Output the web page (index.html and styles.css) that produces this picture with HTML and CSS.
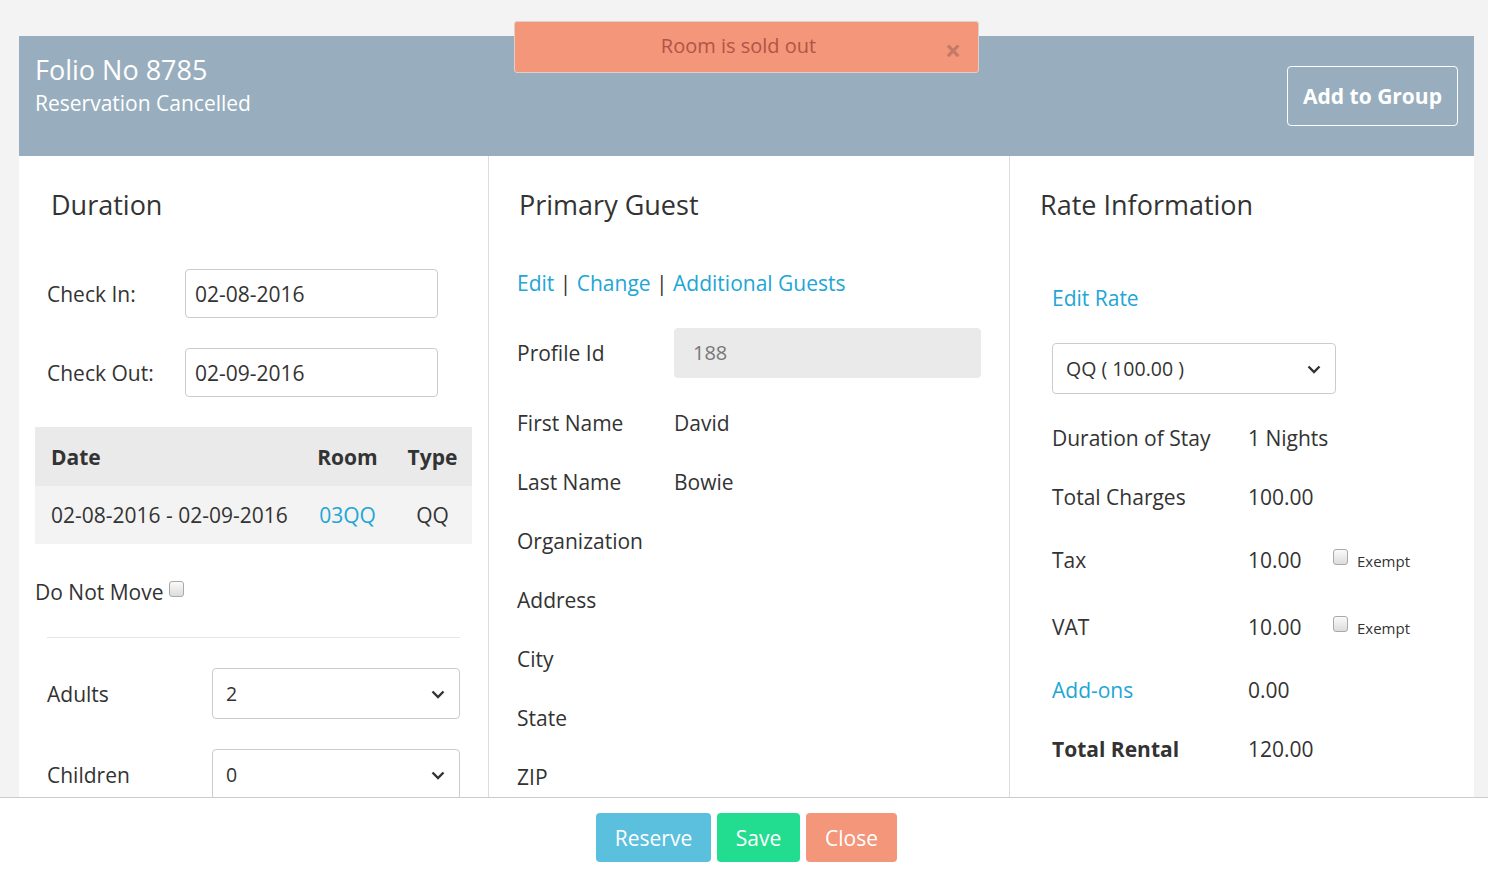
FILE: index.html
```html
<!DOCTYPE html>
<html>
<head>
<meta charset="utf-8">
<link rel="stylesheet" href="styles.css">
</head>
<body>
<div class="page">
  <div class="modal">
    <header class="head">
      <div class="head-titles">
        <div class="folio">Folio No 8785</div>
        <div class="status">Reservation Cancelled</div>
      </div>
      <button class="btn-outline">Add to Group</button>
    </header>
    <div class="cols">
      <section class="col col-duration">
        <h2 class="col-title">Duration</h2>
        <div class="frow frow-date">
          <label class="lbl lbl-date">Check In:</label>
          <div class="input input-date">02-08-2016</div>
        </div>
        <div class="frow frow-date">
          <label class="lbl lbl-date">Check Out:</label>
          <div class="input input-date">02-09-2016</div>
        </div>
        <table class="rooms">
          <colgroup><col class="w-date"><col class="w-room"><col class="w-type"></colgroup>
          <thead>
            <tr><th class="c-date">Date</th><th class="c-mid">Room</th><th class="c-mid">Type</th></tr>
          </thead>
          <tbody>
            <tr><td class="c-date">02-08-2016 - 02-09-2016</td><td class="c-mid"><a class="link">03QQ</a></td><td class="c-mid">QQ</td></tr>
          </tbody>
        </table>
        <div class="dnm">Do Not Move <input type="checkbox" class="chk"></div>
        <hr class="sep">
        <div class="frow">
          <label class="lbl lbl-count">Adults</label>
          <div class="input select select-count">2
            <svg class="chev" width="14" height="9" viewBox="0 0 14 9"><path d="M1.5 1.5 L7 7 L12.5 1.5" fill="none" stroke="#333" stroke-width="2.4"/></svg>
          </div>
        </div>
        <div class="frow">
          <label class="lbl lbl-count">Children</label>
          <div class="input select select-count">0
            <svg class="chev" width="14" height="9" viewBox="0 0 14 9"><path d="M1.5 1.5 L7 7 L12.5 1.5" fill="none" stroke="#333" stroke-width="2.4"/></svg>
          </div>
        </div>
      </section>

      <section class="col col-guest">
        <h2 class="col-title">Primary Guest</h2>
        <div class="links"><a class="link">Edit</a> | <a class="link">Change</a> | <a class="link">Additional Guests</a></div>
        <div class="grow">
          <span class="glbl">Profile Id</span>
          <div class="input input-ro">188</div>
        </div>
        <div class="grow"><span class="glbl">First Name</span><span>David</span></div>
        <div class="grow"><span class="glbl">Last Name</span><span>Bowie</span></div>
        <div class="grow"><span class="glbl">Organization</span></div>
        <div class="grow"><span class="glbl">Address</span></div>
        <div class="grow"><span class="glbl">City</span></div>
        <div class="grow"><span class="glbl">State</span></div>
        <div class="grow"><span class="glbl">ZIP</span></div>
      </section>

      <section class="col col-rate">
        <h2 class="col-title">Rate Information</h2>
        <div class="rate-body">
          <a class="link edit-rate">Edit Rate</a>
          <div class="input select select-rate">QQ ( 100.00 )
            <svg class="chev" width="14" height="9" viewBox="0 0 14 9"><path d="M1.5 1.5 L7 7 L12.5 1.5" fill="none" stroke="#333" stroke-width="2.4"/></svg>
          </div>
          <div class="rrow"><span class="rlbl">Duration of Stay</span><span class="rval">1 Nights</span></div>
          <div class="rrow"><span class="rlbl">Total Charges</span><span class="rval">100.00</span></div>
          <div class="rrow rrow-tall"><span class="rlbl">Tax</span><span class="rval">10.00</span><span class="exempt"><input type="checkbox" class="chk"> Exempt</span></div>
          <div class="rrow rrow-tall"><span class="rlbl">VAT</span><span class="rval">10.00</span><span class="exempt"><input type="checkbox" class="chk"> Exempt</span></div>
          <div class="rrow"><a class="link rlbl">Add-ons</a><span class="rval">0.00</span></div>
          <div class="rrow"><strong class="rlbl">Total Rental</strong><span class="rval">120.00</span></div>
        </div>
      </section>
    </div>
  </div>

  <footer class="foot">
    <button class="btn btn-reserve">Reserve</button>
    <button class="btn btn-save">Save</button>
    <button class="btn btn-close">Close</button>
  </footer>

  <div class="toast">
    <span class="toast-msg">Room is sold out</span>
    <span class="toast-x">×</span>
  </div>
</div>
</body>
</html>
```

FILE: styles.css
```css
* { box-sizing: border-box; }
html, body { margin: 0; padding: 0; }
body {
  font-family: "Open Sans", "Liberation Sans", sans-serif;
  font-size: 21px;
  color: #333;
  background: #f3f3f3;
}
.page {
  position: relative;
  height: 100vh;
  display: flex;
  flex-direction: column;
  overflow: hidden;
}
.modal {
  flex: 1;
  min-height: 0;
  margin: 36px 14px 0 19px;
  background: #fff;
  display: flex;
  flex-direction: column;
  overflow: hidden;
}
.head {
  height: 120px;
  flex: none;
  background: #98aebe;
  color: #fff;
  display: flex;
  justify-content: space-between;
  padding: 16px 16px 0 16px;
}
.folio { font-size: 27px; line-height: 36px; }
.status { font-size: 21px; line-height: 30px; }
.btn-outline {
  align-self: center;
  margin-top: -16px;
  height: 60px;
  width: 171px;
  padding: 0;
  background: transparent;
  border: 1px solid #fff;
  border-radius: 4px;
  color: #fff;
  font-family: inherit;
  font-weight: 700;
  font-size: 21px;
}
.cols {
  flex: 1;
  display: grid;
  grid-template-columns: 469px 521px 1fr;
}
.col { padding-top: 34px; }
.col-guest, .col-rate { border-left: 1px solid #dcdcdc; }
.col-title {
  margin: 0;
  font-size: 27px;
  font-weight: 400;
  line-height: 30px;
}
.col-duration { padding-left: 16px; padding-right: 16px; }
.col-duration .col-title { padding-left: 16px; margin-bottom: 49px; }
.frow {
  display: flex;
  align-items: center;
  margin-bottom: 30px;
  padding-left: 12px;
}
.lbl { line-height: 28px; }
.lbl-date { width: 138px; }
.lbl-count { width: 165px; }
.input {
  border: 1px solid #ccc;
  border-radius: 4px;
  background: #fff;
  display: flex;
  align-items: center;
  line-height: 28px;
}
.input-date { width: 253px; height: 49px; padding-left: 9px; }
.select { position: relative; padding-left: 13px; font-size: 19.5px; }
.chev { position: absolute; right: 14px; top: 50%; margin-top: -4px; }
.select-count { width: 248px; height: 51px; }
.rooms {
  width: 100%;
  table-layout: fixed;
  border-collapse: collapse;
  margin-bottom: 34px;
}
.w-date { width: 267px; }
.w-room { width: 91px; }
.w-type { width: 79px; }
.rooms th, .rooms td {
  padding: 15px 0 15px 16px;
  line-height: 28px;
  white-space: nowrap;
}
.rooms th { background: #eaeaea; font-weight: 700; text-align: left; }
.rooms td { background: #f3f3f3; }
.rooms .c-mid { text-align: center; padding-left: 0; padding-right: 0; }
.rooms th.c-date { height: 59px; }
.link { color: #21a6d6; text-decoration: none; }
.dnm { line-height: 28px; }
.chk {
  appearance: none;
  -webkit-appearance: none;
  width: 15px;
  height: 16px;
  margin: 0;
  border: 1px solid #a9a9a9;
  border-radius: 3px;
  background: linear-gradient(#fafafa, #dcdcdc);
  vertical-align: 3px;
}
.sep {
  border: 0;
  border-top: 1px solid #e6e6e6;
  margin: 31px 12px 30px 12px;
}
.col-guest { padding-left: 28px; padding-right: 28px; }
.col-guest .col-title { padding-left: 2px; margin-bottom: 49px; }
.links { line-height: 28px; margin-bottom: 31px; }
.grow { display: flex; align-items: center; line-height: 28px; margin-bottom: 31px; }
.glbl { width: 157px; }
.input-ro {
  flex: 1;
  height: 50px;
  background: #eaeaea;
  border-color: #eaeaea;
  color: #777;
  padding-left: 18px;
  font-size: 20px;
}
.col-rate { padding-left: 30px; }
.col-rate .col-title { margin-bottom: 64px; }
.rate-body { padding-left: 12px; }
.edit-rate { display: block; line-height: 28px; margin-bottom: 31px; }
.select-rate { width: 284px; height: 51px; margin-bottom: 30px; }
.rrow { display: flex; align-items: center; height: 28px; margin-bottom: 31px; }
.rrow-tall { height: 36px; }
.rlbl { width: 196px; }
.rval { width: 85px; }
.exempt { font-size: 15px; display: flex; align-items: center; gap: 9px; margin-top: 2px; }
.exempt .chk { margin-top: -9px; }
.foot {
  flex: none;
  height: 76px;
  background: #fff;
  border-top: 1px solid #ccc;
  display: flex;
  justify-content: center;
  align-items: flex-start;
  gap: 6px;
  padding-top: 15px;
  padding-left: 5px;
}
.btn {
  height: 49px;
  border: 0;
  border-radius: 4px;
  color: #fff;
  font-family: inherit;
  font-size: 21px;
  padding: 0;
}
.btn-reserve { background: #5bc0de; width: 115px; }
.btn-save { background: #22dd8f; width: 83px; }
.btn-close { background: #f4967a; width: 91px; }
.toast {
  position: absolute;
  top: 21px;
  left: 514px;
  width: 465px;
  height: 52px;
  background: #f4967a;
  border: 1px solid #e0cfc8;
  border-radius: 3px;
  display: flex;
  align-items: center;
  justify-content: center;
  padding-right: 16px;
  padding-bottom: 4px;
}
.toast-msg { color: #b25446; font-size: 20px; }
.toast-x {
  position: absolute;
  right: 17px;
  top: 14px;
  color: #c27a66;
  font-size: 28px;
  font-weight: 700;
  line-height: 28px;
}
```
